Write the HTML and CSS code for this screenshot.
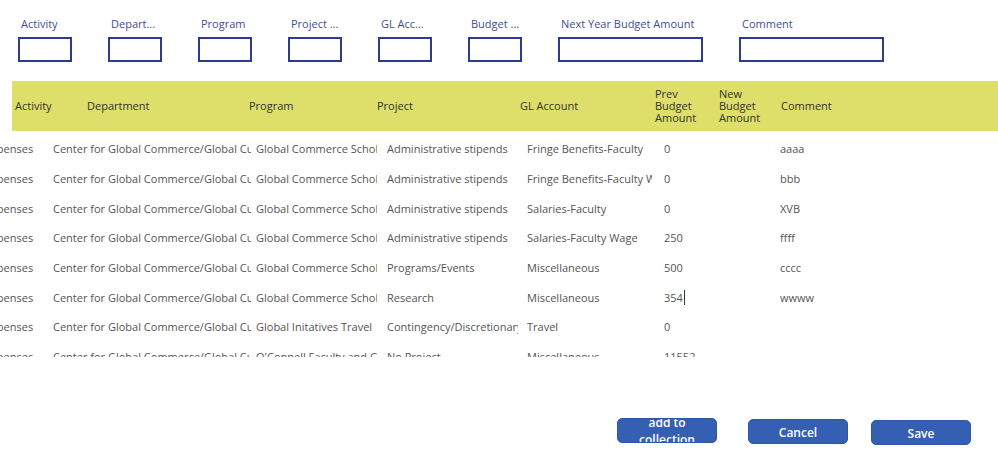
FILE: index.html
```html
<!DOCTYPE html>
<html lang="en">
<head>
<meta charset="UTF-8">
<title>Budget Entry</title>
<link rel="stylesheet" href="styles.css">
</head>
<body>

<div class="filters">
  <div class="filter"><label>Activity</label><div class="filter-box"></div></div>
  <div class="filter"><label>Depart...</label><div class="filter-box"></div></div>
  <div class="filter"><label>Program</label><div class="filter-box"></div></div>
  <div class="filter"><label>Project ...</label><div class="filter-box"></div></div>
  <div class="filter"><label>GL Acc...</label><div class="filter-box"></div></div>
  <div class="filter"><label>Budget ...</label><div class="filter-box"></div></div>
  <div class="filter wide"><label>Next Year Budget Amount</label><div class="filter-box"></div></div>
  <div class="filter wide"><label>Comment</label><div class="filter-box"></div></div>
</div>

<div class="grid-header">
  <div class="hcell c-act">Activity</div>
  <div class="hcell c-dep">Department</div>
  <div class="hcell c-prog">Program</div>
  <div class="hcell c-proj">Project</div>
  <div class="hcell c-gl">GL Account</div>
  <div class="hcell c-prev">Prev<br>Budget<br>Amount</div>
  <div class="hcell c-new">New<br>Budget<br>Amount</div>
  <div class="hcell c-com">Comment</div>
</div>

<div class="gallery">
  <div class="row">
    <div class="cell r-act">Expenses</div>
    <div class="cell r-dep">Center for Global Commerce/Global Culture</div>
    <div class="cell r-prog">Global Commerce Scholars</div>
    <div class="cell r-proj">Administrative stipends</div>
    <div class="cell r-gl">Fringe Benefits-Faculty</div>
    <div class="cell r-prev">0</div>
    <div class="cell r-com">aaaa</div>
  </div>
  <div class="row">
    <div class="cell r-act">Expenses</div>
    <div class="cell r-dep">Center for Global Commerce/Global Culture</div>
    <div class="cell r-prog">Global Commerce Scholars</div>
    <div class="cell r-proj">Administrative stipends</div>
    <div class="cell r-gl">Fringe Benefits-Faculty Wage</div>
    <div class="cell r-prev">0</div>
    <div class="cell r-com">bbb</div>
  </div>
  <div class="row">
    <div class="cell r-act">Expenses</div>
    <div class="cell r-dep">Center for Global Commerce/Global Culture</div>
    <div class="cell r-prog">Global Commerce Scholars</div>
    <div class="cell r-proj">Administrative stipends</div>
    <div class="cell r-gl">Salaries-Faculty</div>
    <div class="cell r-prev">0</div>
    <div class="cell r-com">XVB</div>
  </div>
  <div class="row">
    <div class="cell r-act">Expenses</div>
    <div class="cell r-dep">Center for Global Commerce/Global Culture</div>
    <div class="cell r-prog">Global Commerce Scholars</div>
    <div class="cell r-proj">Administrative stipends</div>
    <div class="cell r-gl">Salaries-Faculty Wage</div>
    <div class="cell r-prev">250</div>
    <div class="cell r-com">ffff</div>
  </div>
  <div class="row">
    <div class="cell r-act">Expenses</div>
    <div class="cell r-dep">Center for Global Commerce/Global Culture</div>
    <div class="cell r-prog">Global Commerce Scholars</div>
    <div class="cell r-proj">Programs/Events</div>
    <div class="cell r-gl">Miscellaneous</div>
    <div class="cell r-prev">500</div>
    <div class="cell r-com">cccc</div>
  </div>
  <div class="row">
    <div class="cell r-act">Expenses</div>
    <div class="cell r-dep">Center for Global Commerce/Global Culture</div>
    <div class="cell r-prog">Global Commerce Scholars</div>
    <div class="cell r-proj">Research</div>
    <div class="cell r-gl">Miscellaneous</div>
    <div class="cell r-prev"><span class="editing">354</span></div>
    <div class="cell r-com">wwww</div>
  </div>
  <div class="row">
    <div class="cell r-act">Expenses</div>
    <div class="cell r-dep">Center for Global Commerce/Global Culture</div>
    <div class="cell r-prog">Global Initatives Travel</div>
    <div class="cell r-proj">Contingency/Discretionary</div>
    <div class="cell r-gl">Travel</div>
    <div class="cell r-prev">0</div>
    <div class="cell r-com"></div>
  </div>
  <div class="row">
    <div class="cell r-act">Expenses</div>
    <div class="cell r-dep">Center for Global Commerce/Global Culture</div>
    <div class="cell r-prog">O'Connell Faculty and Graduate</div>
    <div class="cell r-proj">No Project</div>
    <div class="cell r-gl">Miscellaneous</div>
    <div class="cell r-prev">11552</div>
    <div class="cell r-com"></div>
  </div>
</div>

<div class="actions">
  <div class="btn btn-collect"><span>add to collection</span></div>
  <div class="btn btn-cancel"><span>Cancel</span></div>
  <div class="btn btn-save"><span>Save</span></div>
</div>

</body>
</html>
```

FILE: styles.css
```css
/* Budget entry screen */
body {
  font-family: 'Open Sans', 'Noto Sans', sans-serif;
  margin: 0;
  padding: 0;
  background: #fff;
  color: #444;
  overflow: hidden;
}

/* filter row */
.filters {
  display: flex;
  gap: 36px;
  padding: 16px 0 0 18px;
}

.filter {
  width: 54px;
}

.filter.wide {
  width: 145px;
}

.filter label {
  display: block;
  font-size: 11px;
  line-height: 16px;
  color: #3f4d99;
  padding-left: 3px;
  white-space: nowrap;
  margin-bottom: 5px;
}

.filter-box {
  height: 21px;
  border: 2px solid #2d3b8f;
}

/* header band */
.grid-header {
  display: flex;
  align-items: center;
  height: 50px;
  margin: 19px 0 0 12px;
  background: #dede6a;
  font-size: 11px;
  line-height: 12px;
  color: #333;
}

.hcell {
  flex: none;
}

.c-act { width: 72px; padding-left: 3px; }
.c-dep { width: 162px; }
.c-prog { width: 128px; }
.c-proj { width: 143px; }
.c-gl { width: 135px; }
.c-prev { width: 64px; }
.c-new { width: 62px; }

/* rows */
.gallery {
  height: 223px;
  overflow: hidden;
  padding-top: 3px;
}

.row {
  display: flex;
  align-items: center;
  height: 29.7px;
  margin-left: -15px;
  font-size: 11px;
  color: #555;
}

.cell {
  flex: none;
  white-space: nowrap;
  overflow: hidden;
}

.r-act { width: 68px; }
.r-dep { width: 198px; margin-right: 5px; }
.r-prog { width: 121px; margin-right: 10px; }
.r-proj { width: 131px; margin-right: 9px; }
.r-gl { width: 125px; margin-right: 12px; }
.r-prev { width: 116px; }

.editing {
  border-right: 1px solid #333;
  padding-right: 1px;
}

/* buttons */
.actions {
  display: flex;
  align-items: flex-start;
  padding: 61px 0 0 617px;
}

.btn {
  display: flex;
  flex-direction: column;
  justify-content: center;
  align-items: center;
  box-sizing: border-box;
  width: 100px;
  height: 25px;
  padding: 2px 14px 0;
  border: 1px solid #2c56a8;
  border-radius: 5px;
  background: #355fb3;
  color: #fff;
  font-size: 12px;
  font-weight: 600;
  line-height: 17px;
  text-align: center;
  overflow: hidden;
}

.btn-collect {
  padding-top: 0;
}

.btn-cancel {
  margin: 1px 0 0 31px;
}

.btn-save {
  margin: 2px 0 0 23px;
}
```
